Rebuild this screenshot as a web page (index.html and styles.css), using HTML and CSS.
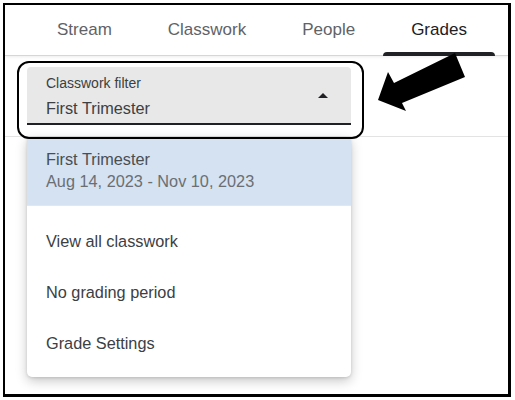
FILE: index.html
```html
<!DOCTYPE html>
<html>
<head>
<meta charset="utf-8">
<link rel="stylesheet" href="styles.css">
</head>
<body>
<div class="frame">
  <nav class="tabs">
    <div class="tab">Stream</div>
    <div class="tab">Classwork</div>
    <div class="tab">People</div>
    <div class="tab active">Grades</div>
  </nav>
  <section class="filter-bar">
    <div class="field">
      <div class="field-text">
        <div class="field-label">Classwork filter</div>
        <div class="field-value">First Trimester</div>
      </div>
      <div class="caret"></div>
    </div>
  </section>
  <div class="menu">
    <div class="menu-item selected">
      <div class="item-title">First Trimester</div>
      <div class="item-sub">Aug 14, 2023 - Nov 10, 2023</div>
    </div>
    <div class="menu-list">
      <div class="menu-item">View all classwork</div>
      <div class="menu-item">No grading period</div>
      <div class="menu-item">Grade Settings</div>
    </div>
  </div>
  <div class="callout"></div>
</div>
<svg class="arrow" width="515" height="400" viewBox="0 0 515 400">
  <polygon points="378,100 388,72 394,83 455,53 465,77 402,103 406,111" fill="#000"/>
</svg>
</body>
</html>
```
FILE: styles.css
```css
* { box-sizing: border-box; }
html, body { margin: 0; padding: 0; background: #fff; }
body {
  position: relative;
  width: 515px;
  height: 400px;
  font-family: "Liberation Sans", Arial, sans-serif;
  overflow: hidden;
}
.frame {
  position: relative;
  margin: 3px;
  width: 508px;
  height: 394px;
  border-style: solid;
  border-color: #000;
  border-width: 2px 3px 3px 2px;
  background: #fff;
}
.tabs {
  display: flex;
  height: 51px;
  padding-left: 24px;
  border-bottom: 1px solid #d6d6d6;
  box-shadow: 0 1px 3px rgba(0,0,0,0.08);
}
.tab {
  position: relative;
  padding: 0 28px;
  font-size: 17px;
  line-height: 50px;
  color: #5f6368;
}
.tab.active { color: #202124; }
.tab.active::after {
  content: "";
  position: absolute;
  left: 0;
  right: 0;
  bottom: -1px;
  height: 4px;
  background: #202124;
  border-radius: 4px 4px 0 0;
}
.filter-bar {
  padding: 11px 0 11px 22px;
  border-bottom: 1px solid #e3e3e3;
}
.field {
  display: flex;
  align-items: center;
  width: 324px;
  height: 58px;
  background: #e8e8e8;
  border-radius: 4px 4px 0 0;
  border-bottom: 2px solid #202124;
  padding: 0 0 0 19px;
}
.field-text { flex: 1; padding-top: 2px; }
.field-label {
  font-size: 14px;
  line-height: 16px;
  color: #3c4043;
}
.field-value {
  margin-top: 7px;
  font-size: 16.3px;
  line-height: 20px;
  color: #3c4043;
}
.caret {
  width: 0;
  height: 0;
  border-left: 5px solid transparent;
  border-right: 5px solid transparent;
  border-bottom: 5px solid #202124;
  margin-right: 23px;
}
.menu {
  position: absolute;
  left: 22px;
  top: 132px;
  width: 324px;
  height: 240px;
  background: #fff;
  border-radius: 0 0 5px 5px;
  box-shadow: 0 4px 12px rgba(0,0,0,0.22), 0 1px 3px rgba(0,0,0,0.12);
}
.menu-item {
  padding-left: 19px;
  font-size: 16.3px;
  color: #3c4043;
}
.menu-item.selected {
  background: #d4e2f2;
  padding-top: 11px;
  padding-bottom: 13px;
  height: 69px;
  border-bottom: 1px solid #e6e6e6;
}
.item-title { line-height: 22px; color: #4a4e52; }
.item-sub { line-height: 22px; color: #6b6f73; }
.menu-list { padding-top: 10px; }
.menu-list .menu-item {
  height: 51px;
  line-height: 51px;
}
.callout {
  position: absolute;
  left: 12px;
  top: 56px;
  width: 347px;
  height: 78px;
  border: 2px solid #000;
  border-radius: 12px;
}
.arrow {
  position: absolute;
  left: 0;
  top: 0;
  pointer-events: none;
}
```
